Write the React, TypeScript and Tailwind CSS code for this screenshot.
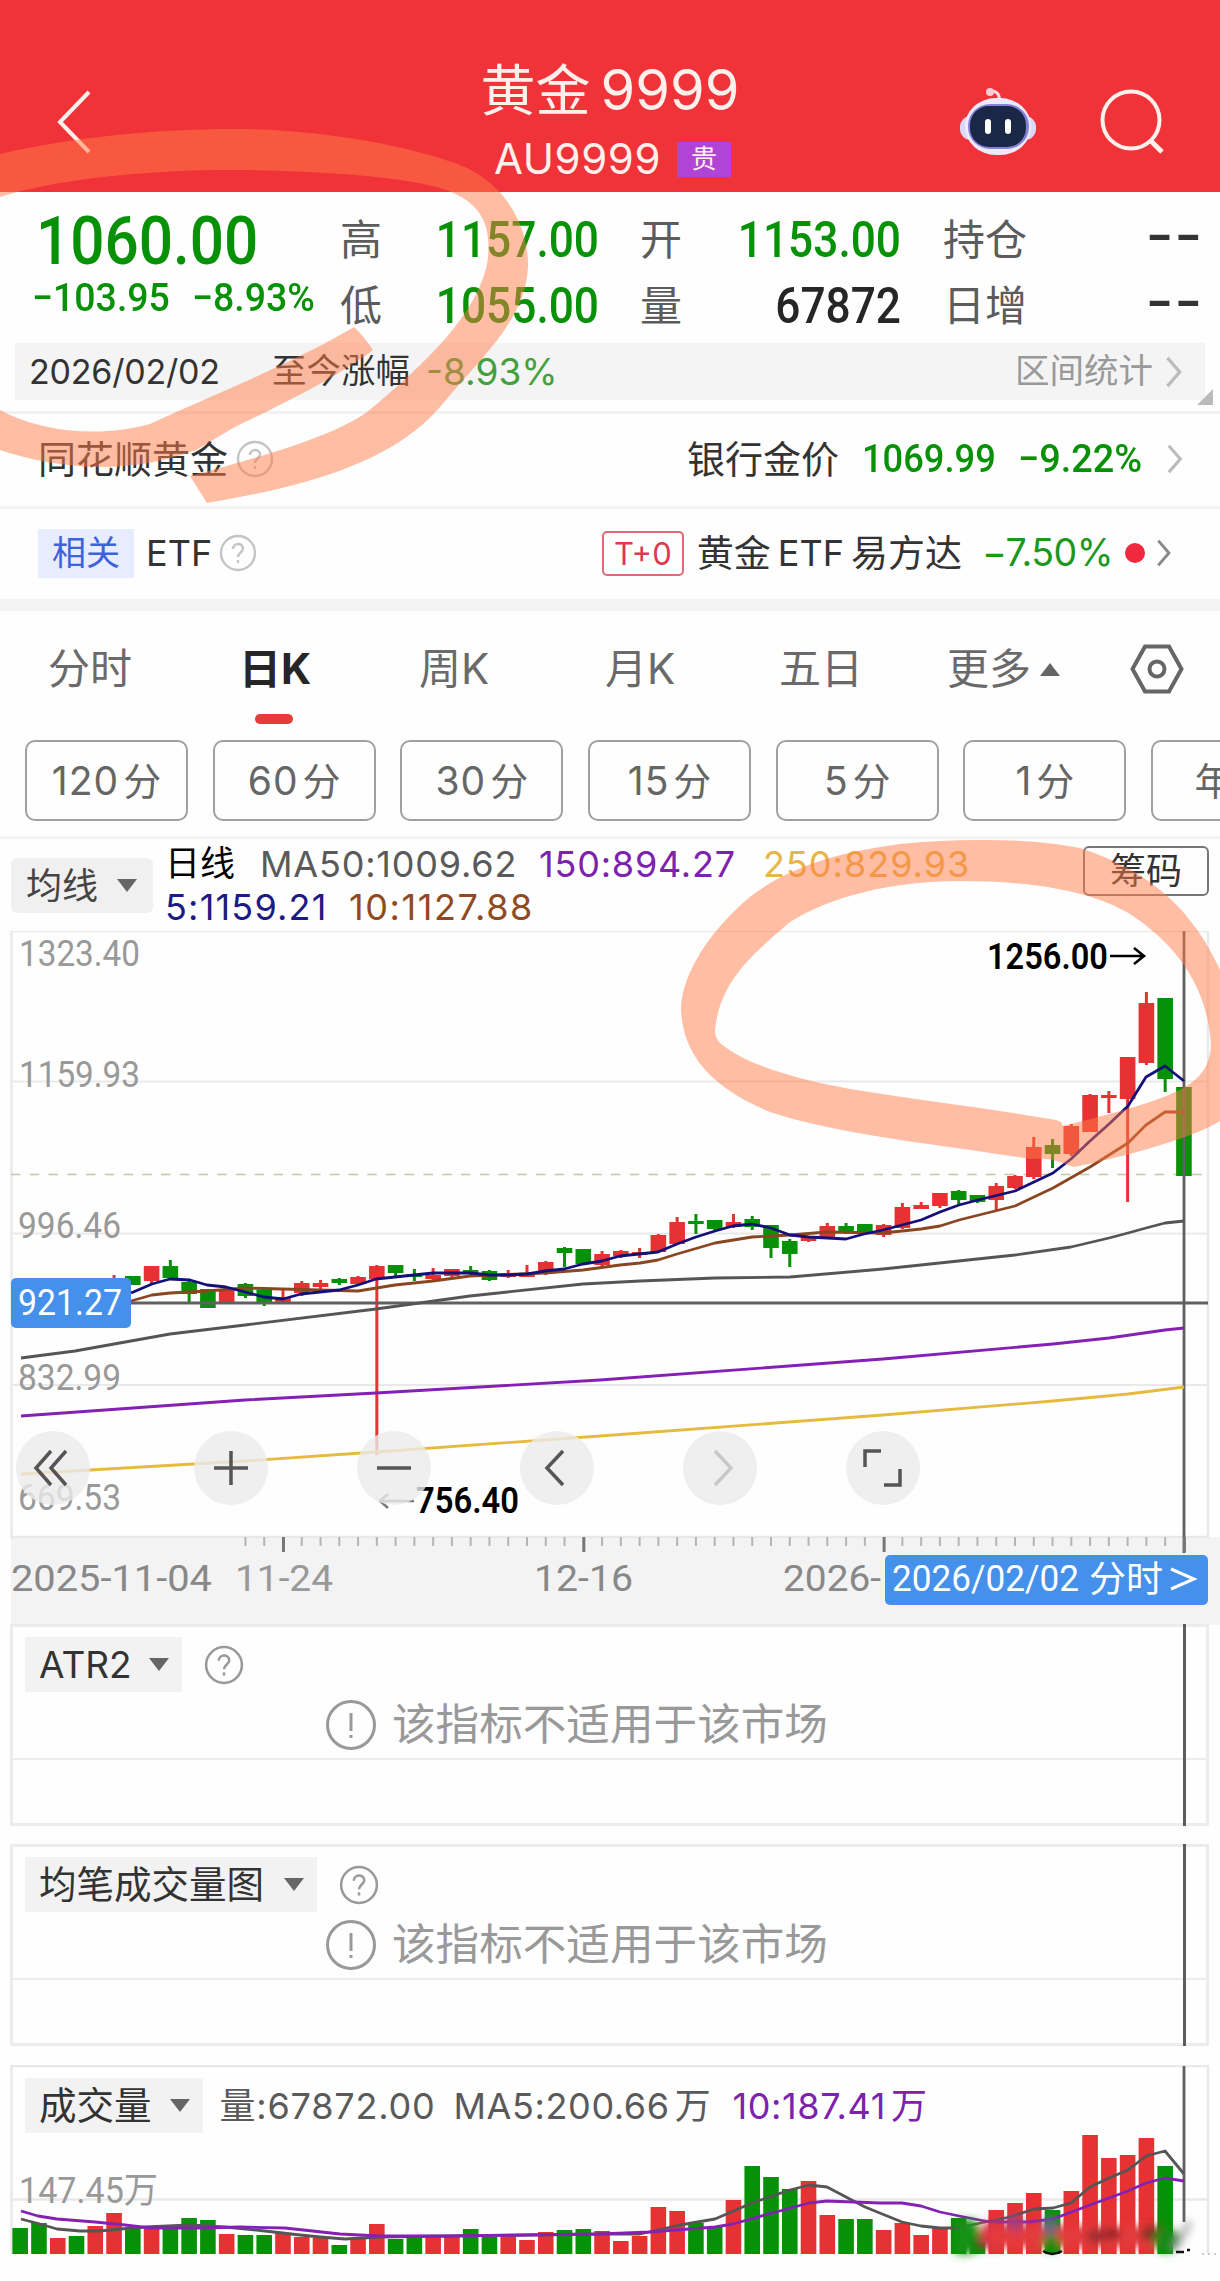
import React from 'react';

const RED = '#e63233';
const GREEN = '#079107';

// [direction, body top, body bottom, wick top, wick bottom], first entry is day 5
const candles: [string, number, number, number, number][] = [
  ['r', 1279, 1285, 1275, 1286],
  ['g', 1276, 1285, 1276, 1285],
  ['r', 1266, 1281, 1266, 1284],
  ['g', 1266, 1278, 1260, 1279],
  ['g', 1282, 1294, 1280, 1302],
  ['g', 1289, 1308, 1289, 1308],
  ['r', 1289, 1302, 1289, 1303],
  ['g', 1284, 1296, 1283, 1298],
  ['g', 1290, 1302, 1289, 1306],
  ['r', 1297, 1302, 1289, 1303],
  ['r', 1283, 1293, 1281, 1296],
  ['r', 1283, 1287, 1280, 1289],
  ['g', 1279, 1283, 1278, 1285],
  ['r', 1277, 1284, 1276, 1285],
  ['r', 1266, 1279, 1265, 1455],
  ['g', 1265, 1273, 1265, 1276],
  ['g', 1274, 1277, 1269, 1281],
  ['r', 1275, 1279, 1268, 1280],
  ['r', 1269, 1276, 1269, 1277],
  ['g', 1270, 1274, 1266, 1275],
  ['g', 1271, 1280, 1270, 1281],
  ['r', 1273, 1277, 1270, 1278],
  ['r', 1274, 1277, 1265, 1277],
  ['r', 1262, 1274, 1261, 1275],
  ['g', 1248, 1253, 1247, 1267],
  ['g', 1249, 1264, 1249, 1264],
  ['r', 1254, 1265, 1251, 1267],
  ['r', 1251, 1256, 1250, 1258],
  ['r', 1252, 1255, 1248, 1258],
  ['r', 1235, 1252, 1234, 1253],
  ['r', 1222, 1244, 1217, 1245],
  ['g', 1221, 1224, 1214, 1234],
  ['g', 1220, 1229, 1220, 1230],
  ['r', 1222, 1227, 1214, 1228],
  ['g', 1219, 1227, 1216, 1230],
  ['g', 1225, 1248, 1225, 1258],
  ['g', 1241, 1254, 1239, 1267],
  ['r', 1237, 1241, 1236, 1242],
  ['r', 1226, 1237, 1223, 1238],
  ['g', 1226, 1232, 1223, 1234],
  ['g', 1224, 1232, 1224, 1233],
  ['r', 1225, 1235, 1224, 1237],
  ['r', 1207, 1228, 1203, 1229],
  ['r', 1205, 1209, 1202, 1209],
  ['r', 1193, 1206, 1193, 1208],
  ['g', 1191, 1200, 1190, 1204],
  ['g', 1195, 1202, 1195, 1203],
  ['r', 1186, 1200, 1183, 1211],
  ['r', 1176, 1188, 1175, 1189],
  ['r', 1147, 1177, 1137, 1179],
  ['g', 1145, 1154, 1139, 1168],
  ['r', 1126, 1154, 1124, 1156],
  ['r', 1095, 1132, 1094, 1132],
  ['r', 1095, 1098, 1091, 1113],
  ['r', 1057, 1099, 1057, 1202],
  ['r', 1003, 1063, 992, 1065],
  ['g', 998, 1079, 998, 1092],
  ['g', 1087, 1176, 1087, 1176],
];

const volumes: [string, number][] = [
  ['g', 26], ['g', 31], ['r', 16], ['g', 18], ['r', 28], ['r', 41], ['g', 26], ['r', 25], ['g', 25], ['g', 36],
  ['g', 34], ['r', 20], ['g', 19], ['g', 19], ['r', 21], ['r', 17], ['r', 16], ['g', 9], ['r', 15], ['r', 30],
  ['g', 15], ['g', 19], ['r', 17], ['r', 18], ['g', 25], ['g', 17], ['r', 20], ['r', 14], ['r', 22], ['g', 24],
  ['g', 25], ['r', 23], ['r', 13], ['r', 18], ['r', 47], ['r', 43], ['g', 31], ['g', 27], ['r', 54], ['g', 88],
  ['g', 77], ['g', 65], ['r', 73], ['r', 39], ['g', 35], ['g', 35], ['r', 24], ['r', 31], ['r', 19], ['r', 26],
  ['g', 36], ['g', 12], ['r', 44], ['r', 51], ['r', 61], ['g', 44], ['r', 63], ['r', 119], ['r', 96], ['r', 99],
  ['r', 116], ['g', 88],
];

const ma5 =
  '131,1293 152,1284 170,1279 190,1280 207,1285 226,1287 245,1292 264,1297 283,1299 301,1294 320,1292 339,1290 358,1285 376,1279 395,1277 414,1275 433,1273 470,1273 490,1275 508,1275 527,1274 545,1271 564,1269 583,1264 602,1261 620,1256 658,1252 677,1244 696,1237 715,1231 733,1226 752,1224 771,1228 790,1235 809,1237 846,1239 864,1234 883,1230 902,1225 921,1220 940,1212 959,1205 978,1200 1015,1191 1034,1182 1053,1173 1071,1159 1090,1141 1109,1124 1128,1106 1146,1077 1165,1066 1184,1081';
const ma10 =
  '131,1301 152,1295 170,1293 207,1291 245,1288 320,1290 358,1291 395,1285 433,1281 470,1276 545,1273 583,1270 620,1265 640,1263 658,1260 677,1254 715,1243 752,1237 790,1235 827,1232 883,1233 921,1229 940,1226 959,1220 1015,1206 1053,1188 1090,1167 1128,1143 1146,1125 1165,1112 1184,1112';
const ma50 =
  '21,1358 75,1351 170,1334 245,1325 376,1309 470,1296 583,1284 640,1281 715,1278 790,1277 883,1269 1015,1255 1071,1247 1109,1238 1128,1233 1146,1228 1165,1223 1184,1221';
const ma150 = '21,1416 245,1400 376,1393 600,1380 883,1359 1053,1344 1109,1338 1165,1330 1184,1328';
const ma250 = '21,1474 245,1461 376,1452 600,1436 883,1415 1053,1401 1128,1394 1184,1387';

const volMa5 =
  '21,2219 40,2224 57,2229 80,2231 100,2231 120,2229 145,2227 190,2225 225,2227 265,2231 300,2235 320,2237 345,2239 380,2237 450,2236 600,2234 640,2234 680,2225 715,2219 752,2203 790,2190 809,2185 827,2187 865,2207 902,2222 921,2226 940,2228 958,2228 985,2222 1010,2217 1034,2209 1053,2208 1071,2203 1090,2187 1109,2178 1128,2170 1146,2156 1165,2151 1184,2174';
const volMa10 =
  '21,2211 38,2216 57,2219 95,2222 125,2225 150,2228 200,2228 240,2227 285,2228 340,2234 380,2236 450,2236 600,2234 650,2232 715,2227 733,2224 765,2215 809,2203 827,2201 880,2203 902,2203 921,2206 940,2212 964,2217 990,2222 1030,2222 1053,2219 1090,2205 1128,2191 1146,2183 1165,2178 1184,2181';

const candleX = (day: number) => 20.2 + day * 18.77;

const tabs = [
  { label: '分时', left: 'w-[163px] pl-[48px]' },
  { label: '日K', left: 'w-[204px] pl-[76px]', active: true },
  { label: '周K', left: 'w-[188px] pl-[52px]' },
  { label: '月K', left: 'w-[188px] pl-[50px]' },
  { label: '五日', left: 'w-[160px] pl-[36px]' },
];

const periods = [
  ['120', '分'],
  ['60', '分'],
  ['30', '分'],
  ['15', '分'],
  ['5', '分'],
  ['1', '分'],
  ['', '年线'],
];

function Chevron({ className = 'h-[34px] w-[18px]', color = '#bbb' }: { className?: string; color?: string }) {
  return (
    <svg viewBox="0 0 18 34" className={className} fill="none" stroke={color} strokeWidth="3.500">
      <path d="M2 2 L15 17 L2 32" />
    </svg>
  );
}

function HelpIcon({ color = '#c4c4c4', className = 'size-[38px]' }: { color?: string; className?: string }) {
  return (
    <svg viewBox="0 0 38 38" className={`shrink-0 ${className}`} fill="none" stroke={color} strokeWidth="2.4">
      <circle cx="19" cy="19" r="17" />
      <path d="M14 15 C14 8.500 24 8.500 24 14.500 C24 18.500 19 18.500 19 23" />
      <path d="M19 26 V29" />
    </svg>
  );
}

function RobotIcon() {
  return (
    <svg viewBox="0 0 78 72" className="h-[72px] w-[78px]">
      <path d="M38 16 C42 8 34 3 29 6" fill="none" stroke="#f6d9e6" strokeWidth="3" />
      <circle cx="30" cy="6" r="4" fill="#f8cdd3" />
      <rect x="0" y="30" width="76" height="24" rx="11" fill="#dcd8f6" />
      <rect x="5" y="12" width="66" height="57" rx="31" fill="#eeeafd" />
      <rect x="8" y="18" width="61" height="45" rx="22" fill="#8583d8" />
      <rect x="10" y="20" width="56" height="41" rx="19" fill="#1b2747" />
      <rect x="25" y="33" width="6" height="15" rx="3" fill="#fff" />
      <rect x="45" y="33" width="6" height="15" rx="3" fill="#fff" />
    </svg>
  );
}

function Caret({ up = false, className = '' }: { up?: boolean; className?: string }) {
  return (
    <svg viewBox="0 0 20 13" className={`h-[13px] w-[20px] shrink-0 ${className}`} fill="#666">
      <path d={up ? 'M10 0 L20 13 L0 13 Z' : 'M0 0 L20 0 L10 13 Z'} />
    </svg>
  );
}

function Header() {
  return (
    <header className="grid h-[192px] grid-cols-[260px_1fr_260px] bg-[#f03239] text-[#fff0ec]">
      <div className="pt-[90px] pl-[56px]">
        <svg viewBox="0 0 36 64" className="h-[64px] w-[36px]" fill="none" stroke="currentColor" strokeWidth="4">
          <path d="M33 2 L4 32 L33 62" />
        </svg>
      </div>
      <div className="flex flex-col items-center pt-[58px]">
        <h1 className="flex h-[64px] items-center gap-[10px] text-[55px] leading-none">
          <span>黄金</span>
          <span className="text-[56px]">9999</span>
        </h1>
        <div className="mt-[18px] flex h-[38px] items-center gap-[16px] pl-[5px]">
          <span className="text-[42px] leading-none tracking-[0.6px]">AU9999</span>
          <span className="flex h-[35px] w-[54px] items-center justify-center bg-[#b143d6] text-[26px] leading-none">贵</span>
        </div>
      </div>
      <div className="flex pt-[86px]">
        <RobotIcon />
        <svg viewBox="0 0 68 68" className="mt-[3px] ml-[61px] h-[68px] w-[68px]" fill="none" stroke="currentColor" strokeWidth="4">
          <circle cx="32" cy="31" r="28.500" />
          <path d="M51 51 L63 63" strokeWidth="5" />
        </svg>
      </div>
    </header>
  );
}

function QuoteNumber({ value, dark = false }: { value: string; dark?: boolean }) {
  return (
    <span className={`origin-right scale-x-[.885] text-right font-[Roboto] text-[50px] font-medium ${dark ? 'text-[#262626]' : 'text-[#079107]'}`}>
      {value}
    </span>
  );
}

function QuoteBlank() {
  return <span className="-translate-y-[5px] origin-right scale-x-[1.36] text-right font-[Roboto] text-[56px] font-medium tracking-[2px] text-[#333]">--</span>;
}

function Quote() {
  return (
    <section className="flex h-[151px] pt-[15px] leading-none">
      <div className="w-[340px] pl-[36px] font-[Roboto] font-medium whitespace-nowrap text-[#079107]">
        <p className="h-[68px] origin-left scale-x-[.9] text-[67px] leading-[68px]">1060.00</p>
        <p className="-ml-[4px] flex origin-left scale-x-[.96] gap-[23px] pt-[3px] text-[39px] leading-[40px]">
          <span>−103.95</span>
          <span>−8.93%</span>
        </p>
      </div>
      <div className="grid h-[132px] w-[865px] grid-cols-[40px_219px_41px_261px_126px_177px] grid-rows-2 items-center text-[42px] text-[#5c5c5c]">
        <span>高</span>
        <QuoteNumber value="1157.00" />
        <span className="ml-[41px]">开</span>
        <QuoteNumber value="1153.00" />
        <span className="text-right">持仓</span>
        <QuoteBlank />
        <span>低</span>
        <QuoteNumber value="1055.00" />
        <span className="ml-[41px]">量</span>
        <QuoteNumber value="67872" dark />
        <span className="text-right">日增</span>
        <QuoteBlank />
      </div>
    </section>
  );
}

function RangeBar() {
  return (
    <section className="relative h-[71px] border-b-[3px] border-[#f1f1f1] px-[15px]">
      <div className="flex h-[57px] items-center bg-[#f4f4f4] pl-[14px] text-[34.500px] leading-none text-[#333]">
        <span className="w-[243px] text-[34px] tracking-[-0.200px]">2026/02/02</span>
        <span>至今涨幅</span>
        <span className="ml-[16px] text-[37px] text-[#43a03c]">-8.93%</span>
        <span className="ml-auto text-[34.500px] text-[#999]">区间统计</span>
        <Chevron className="mr-[22px] ml-[12px] h-[32px] w-[18px]" />
      </div>
      <svg viewBox="0 0 16 16" className="absolute right-[7px] bottom-[6px] size-[16px]" fill="#bbb">
        <path d="M16 0 V16 H0 Z" />
      </svg>
    </section>
  );
}

function LinkRows() {
  return (
    <section className="leading-none text-[#333]">
      <div className="flex h-[95px] items-center border-b-[3px] border-[#f3f3f3] pb-[2px] pl-[38px] text-[38px]">
        <span>同花顺黄金</span>
        <HelpIcon className="ml-[8px] size-[38px]" />
        <span className="ml-auto">银行金价</span>
        <span className="ml-[23px] w-[156px] origin-left scale-x-[.93] font-[Roboto] text-[39px] font-medium text-[#079107]">1069.99</span>
        <span className="w-[129px] origin-left scale-x-[.97] font-[Roboto] text-[39px] font-medium text-[#079107]">−9.22%</span>
        <Chevron className="mr-[37px] ml-[20px] h-[32px] w-[16px]" />
      </div>
      <div className="flex h-[90px] items-center pb-[2px] pl-[38px] text-[36px]">
        <span className="flex h-[49px] w-[96px] items-center justify-center bg-[#e7edfe] text-[34px] text-[#3c63d9]">相关</span>
        <span className="ml-[12px] text-[36px]">ETF</span>
        <HelpIcon className="ml-[7px] size-[38px]" />
        <span className="ml-auto flex h-[45px] w-[82px] items-center justify-center rounded-[5px] border-2 border-[#e0697a] text-[31px] text-[#dd3a50]">
          T+0
        </span>
        <span className="ml-[13px] flex items-center gap-[7px] text-[37px]">
          黄金<span className="text-[36px]">ETF</span>易方达
        </span>
        <span className="ml-[20px] text-[37.500px] tracking-[-0.500px] text-[#1d971d]">−7.50%</span>
        <span className="ml-[12px] size-[20px] rounded-full bg-[#f02840]" />
        <Chevron className="mr-[48px] ml-[11px] h-[28px] w-[16px]" color="#888" />
      </div>
      <div className="h-[12px] bg-[#f4f4f4]" />
    </section>
  );
}

function PeriodTabs() {
  return (
    <section className="h-[228px] overflow-hidden border-b-[3px] border-[#f3f3f3] leading-none">
      <nav className="flex h-[115px] items-center pt-[1px] text-[42px] text-[#6a6a6a]">
        {tabs.map((tab) => (
          <span key={tab.label} className={`${tab.left} relative ${tab.active ? 'font-bold text-[#262626]' : ''}`}>
            {tab.label}
            {tab.active && <span className="absolute -bottom-[34px] left-[92px] h-[10px] w-[38px] rounded-[5px] bg-[#e53d3b]" />}
          </span>
        ))}
        <span className="ml-[44px]">更多</span>
        <Caret up className="ml-[9px]" />
        <svg viewBox="0 0 54 50" className="ml-[70px] h-[50px] w-[54px]" fill="none" stroke="#666" strokeWidth="4">
          <path d="M15 2.500 H39 L51.500 25 L39 47.500 H15 L2.500 25 Z" />
          <circle cx="27" cy="25" r="7.500" />
        </svg>
      </nav>
      <div className="mt-[14px] flex w-[1400px] gap-[24.700px] pl-[25px]">
        {periods.map(([count, unit]) => (
          <button key={count} className="flex h-[81px] w-[163px] items-center justify-center gap-[4px] rounded-[10px] border-2 border-[#a0a0a0] text-[38px] text-[#666]">
            {count && <span className="text-[39px] tracking-[1px]">{count}</span>}
            <span>{unit}</span>
          </button>
        ))}
      </div>
    </section>
  );
}

function AverageLegend() {
  return (
    <section className="flex h-[92px] leading-none whitespace-nowrap">
      <div className="mt-[19px] ml-[11px] flex h-[55px] w-[142px] items-center rounded-[6px] bg-[#f0f0f0] pl-[15px] text-[36px] text-[#444]">
        均线
        <Caret className="ml-[19px]" />
      </div>
      <div className="ml-[12px] pt-[2px] text-[36px]">
        <div className="flex h-[45px] items-center">
          <span className="w-[95px] text-[35px] text-black">日线</span>
          <span className="w-[279px] tracking-[0.800px] text-[#5a5a5a]">MA50:1009.62</span>
          <span className="w-[224px] tracking-[0.800px] text-[#7c22ae]">150:894.27</span>
          <span className="tracking-[1px] text-[#e9b548]">250:829.93</span>
        </div>
        <div className="flex h-[42px] items-center">
          <span className="w-[184px] tracking-[1.200px] text-[#1e1a84]">5:1159.21</span>
          <span className="tracking-[1.600px] text-[#8f4a22]">10:1127.88</span>
        </div>
      </div>
      <div className="mt-[7px] mr-[11px] ml-auto flex h-[50px] w-[126px] items-center justify-center rounded-[6px] border-2 border-[#777] text-[36px] text-[#333]">
        筹码
      </div>
    </section>
  );
}

interface LabelProps {
  x: number;
  y: number;
  w: number;
  children: string;
  fill?: string;
  bold?: boolean;
}

function AxisLabel({ x, y, w, children, fill = '#999', bold = false }: LabelProps) {
  return (
    <text
      x={x}
      y={y}
      textLength={w}
      lengthAdjust="spacingAndGlyphs"
      fill={fill}
      fontFamily="Roboto, 'Noto Sans CJK SC', sans-serif"
      fontSize="36.500"
      fontWeight={bold ? 600 : 400}
    >
      {children}
    </text>
  );
}

function CandleChart() {
  return (
    <div className="relative h-[695px]">
      <svg viewBox="0 930 1220 695" className="block h-[695px] w-full">
        <rect x="11" y="1536" width="1209" height="88" fill="#f3f3f3" />
        <g fill="none" stroke="#e9e9e9" strokeWidth="2">
          <rect x="11.500" y="930" width="1196.500" height="606" strokeWidth="2.500" />
          <path d="M11 1080.500 H1208 M11 1232.500 H1208 M11 1384 H1208" />
        </g>
        <path d="M11 1173.500 H1208" stroke="#c6c6a2" strokeWidth="1.600" strokeDasharray="9.500 9.250" />
        <AxisLabel x={19} y={965} w={121}>1323.40</AxisLabel>
        <AxisLabel x={19} y={1086} w={121}>1159.93</AxisLabel>
        <AxisLabel x={18} y={1237} w={103}>996.46</AxisLabel>
        <AxisLabel x={18} y={1389} w={103}>832.99</AxisLabel>
        <AxisLabel x={18} y={1509} w={103}>669.53</AxisLabel>

        {candles.map(([dir, top, bottom, high, low], i) => {
          const x = candleX(i + 5);
          return (
            <g key={i} fill={dir === 'r' ? RED : GREEN}>
              <rect x={x - 1.5} y={high - 1} width="3" height={low - high} />
              <rect x={x - 7.8} y={top - 1} width="15.600" height={bottom - top} />
            </g>
          );
        })}
        <g fill="none" strokeWidth="2.800" strokeLinejoin="round">
          <path d="M131 1302 H1208 M1184 930 V1552" stroke="#606060" />
          <g transform="translate(0 -1)">
            <polyline points={ma250} stroke="#e6b93f" />
            <polyline points={ma150} stroke="#8420b4" />
            <polyline points={ma50} stroke="#555" />
            <polyline points={ma10} stroke="#8a4521" />
            <polyline points={ma5} stroke="#14107a" />
          </g>
        </g>

        <AxisLabel x={987} y={968} w={121} fill="#000" bold>1256.00</AxisLabel>
        <path d="M1110 955 H1144 M1134 947 L1144 955 L1134 963" fill="none" stroke="#000" strokeWidth="2.600" />
        <AxisLabel x={416} y={1512} w={103} fill="#000" bold>756.40</AxisLabel>
        <path d="M414 1500 H380 M388 1493 L380 1500 L388 1507" fill="none" stroke="#777" strokeWidth="2.400" />

        <rect x="11" y="1277" width="120" height="50" rx="5" fill="#4490ea" />
        <AxisLabel x={18} y={1314} w={104} fill="#fff">921.27</AxisLabel>

        {Array.from({ length: 51 }, (_, i) => {
          const major = (i + 12) % 16 === 14;
          return (
            <rect key={i} x={candleX(i + 12) - 1} y="1536" width={major ? 3 : 2} height={major ? 15 : 9} fill={major ? '#777' : '#b5b5b5'} />
          );
        })}
        <AxisLabel x={11} y={1590} w={201} fill="#888">2025-11-04</AxisLabel>
        <AxisLabel x={235} y={1590} w={98} fill="#999">11-24</AxisLabel>
        <AxisLabel x={534} y={1590} w={99} fill="#888">12-16</AxisLabel>
        <AxisLabel x={783} y={1590} w={98} fill="#888">2026-</AxisLabel>
        <rect x="885" y="1554" width="323" height="50" rx="5" fill="#4490ea" />
        <AxisLabel x={892} y={1590} w={187} fill="#fff">2026/02/02</AxisLabel>
        <AxisLabel x={1089} y={1591} w={74} fill="#fff">分时</AxisLabel>
        <path d="M1171 1568 L1194 1578 L1171 1588" fill="none" stroke="#fff" strokeWidth="3" />
      </svg>
      <Toolbar />
    </div>
  );
}

function Toolbar() {
  const icons = [
    'M35 20 L20 37 L35 54 M50 20 L35 37 L50 54',
    'M37 20 V54 M20 37 H54',
    'M20 37 H54',
    'M43 20 L27 37 L43 54',
    'M32 20 L48 37 L32 54',
    'M19 36 V20 H35 M54 38 V54 H38',
  ];
  return (
    <div className="absolute top-[500px] left-[16px] flex gap-[89px]">
      {icons.map((d, i) => (
        <button key={d} className={`size-[74px] rounded-full bg-[#ebebeb]/80 ${i === 0 ? 'mr-[15px]' : ''}`}>
          <svg viewBox="0 0 74 74" className="size-[74px]" fill="none" stroke={i === 4 ? '#c8c8c8' : '#555'} strokeWidth="3.500">
            <path d={d} />
          </svg>
        </button>
      ))}
    </div>
  );
}

function IndicatorName({ name, className = 'gap-[20px] text-[37.500px]' }: { name: string; className?: string }) {
  return (
    <span className={`flex h-[55px] items-center bg-[#f2f2f2] pr-[13px] pl-[14px] leading-none text-[#333] ${className}`}>
      {name}
      <Caret />
    </span>
  );
}

function EmptyPanel({ name, nameClass, className }: { name: string; nameClass?: string; className: string }) {
  return (
    <section className={`relative ml-[10px] h-[202px] w-[1199px] border-[3px] border-[#ececec] leading-none ${className}`}>
      <div className="flex items-center gap-[22px] pt-[10px] pl-[12px]">
        <IndicatorName name={name} className={nameClass} />
        <HelpIcon color="#999" className="size-[40px]" />
      </div>
      <div className="flex h-[68px] items-center border-b-2 border-[#ececec] pl-[312px] text-[43.600px] text-[#999]">
        <svg viewBox="0 0 52 52" className="mr-[15px] size-[52px]" fill="none" stroke="#999" strokeWidth="3">
          <circle cx="26" cy="26" r="23.500" />
          <path d="M26 14 V32 M26 36 V39" />
        </svg>
        该指标不适用于该市场
      </div>
      <div className="absolute -top-[3px] right-[20px] h-[202px] w-[3px] bg-[#5c5c5c]" />
    </section>
  );
}

function VolumePanel() {
  return (
    <section className="relative mt-[19px] h-[216px] leading-none whitespace-nowrap">
      <svg viewBox="0 2065 1220 216" className="block h-[216px] w-full">
        <defs>
          <filter id="soft" x="-20%" y="-50%" width="140%" height="200%">
            <feGaussianBlur stdDeviation="4" />
          </filter>
        </defs>
        <path d="M11.500 2254 V2066 H1208 V2254 M11 2199.500 H1208" fill="none" stroke="#e9e9e9" strokeWidth="2.500" />
        <AxisLabel x={19} y={2203} w={139}>147.45万</AxisLabel>
        {volumes.map(([dir, h], i) => (
          <rect key={i} x={candleX(i) - 7.8} y={2254 - h} width="15.600" height={h} fill={dir === 'r' ? RED : GREEN} />
        ))}
        <g fill="none" strokeWidth="2.800" strokeLinejoin="round">
          <path d="M1184 2066 V2222" stroke="#606060" />
          <polyline points={volMa5} stroke="#555" />
          <polyline points={volMa10} stroke="#8420b4" />
        </g>
        <g filter="url(#soft)">
          <path d="M958 2220 H976 L984 2246 L970 2254 H956 Z" fill="#159215" />
          <ellipse cx="981" cy="2243" rx="6" ry="6" fill="#103c10" />
          <ellipse cx="993" cy="2235" rx="13" ry="14" fill="#d9304b" />
          <rect x="986" y="2226" width="170" height="21" rx="10" fill="#e43a3c" />
          <ellipse cx="1015" cy="2223" rx="8" ry="8" fill="#a04080" />
          <ellipse cx="1050" cy="2226" rx="7" ry="10" fill="#5b6a8a" />
          <ellipse cx="1051" cy="2243" rx="9" ry="8" fill="#0b8a10" />
          <ellipse cx="1096" cy="2236" rx="10" ry="7" fill="#9c2b2f" />
          <ellipse cx="1112" cy="2234" rx="8" ry="5" fill="#7b1a20" />
          <ellipse cx="1155" cy="2234" rx="14" ry="8" fill="#7c2a20" />
          <ellipse cx="1166" cy="2240" rx="13" ry="12" fill="#158a14" />
          <path d="M1174 2250 L1190 2222" stroke="#999" strokeWidth="5" />
        </g>
        <path d="M1043 2251 Q1052 2257 1062 2251 M1176 2252 H1184 M1187 2250 H1190" fill="none" stroke="#111" strokeWidth="2.500" />
        <path d="M1202 2254 H1217" stroke="#ccc" strokeWidth="2" strokeDasharray="2 4" />
      </svg>
      <div className="absolute top-[13px] left-[25px] flex items-center text-[36px]">
        <IndicatorName name="成交量" className="gap-[18px] text-[37.500px]" />
        <span className="ml-[17px] w-[234px] tracking-[0.800px] text-[#5a5a5a]">量:67872.00</span>
        <span className="flex w-[279px] gap-[5px] tracking-[0.600px] text-[#5a5a5a]">
          MA5:200.66<span>万</span>
        </span>
        <span className="flex gap-[5px] tracking-[0.600px] text-[#7c22ae]">
          10:187.41<span>万</span>
        </span>
      </div>
    </section>
  );
}

// Translucent highlighter loops drawn over the price and the latest candles
function MarkerStrokes() {
  return (
    <svg viewBox="0 0 1220 2281" className="pointer-events-none absolute inset-0 h-[2281px] w-[1220px]" fill="#ff7b47" fillOpacity="0.5">
      <path
        d="M0 154 C70 138 150 129 235 129 C320 129 410 146 460 165 C505 183 528 225 528 265 C527 320 480 358 440 407 C390 465 300 487 207 503 L190 476 C255 458 325 440 366 413 C430 360 475 315 487 265 C494 220 478 196 428 185 C370 172 250 168 180 171 C110 174 40 184 0 197 Z
        M0 410 C40 432 100 438 150 424 C190 405 290 365 354 327 Q362 334 373 350 C330 382 270 410 233 428 L196 450 C130 475 60 470 0 450 Z"
      />
      <path d="M1220 970 C1195 915 1155 872 1080 848 C1030 838 960 838 900 844 C840 852 790 866 750 897 C710 930 681 975 681 1010 C683 1050 705 1085 770 1112 C840 1135 930 1143 1030 1159 C1050 1158 1055 1160 1074 1167 C1110 1160 1190 1140 1220 1121 L1220 1121 V970 Z M1061 1122 L1056 1120 C980 1107 910 1099 850 1089 C800 1080 745 1065 720 1043 Q715 1038 715 1030 C720 985 745 960 790 922 C830 897 890 881 960 881 C1030 881 1090 890 1130 914 C1180 947 1208 990 1211 1045 C1209 1085 1180 1097 1063 1126 Z" fillRule="evenodd" />
    </svg>
  );
}

export default function App() {
  return (
    <main className="relative h-[2281px] w-[1220px] overflow-hidden bg-[#fefefe] font-[Inter,'Noto_Sans_CJK_SC',sans-serif]">
      <Header />
      <Quote />
      <RangeBar />
      <LinkRows />
      <PeriodTabs />
      <AverageLegend />
      <CandleChart />
      <EmptyPanel name="ATR2" nameClass="gap-[17px] text-[37px]" className="-mt-[2px]" />
      <EmptyPanel name="均笔成交量图" className="mt-[18px]" />
      <VolumePanel />
      <MarkerStrokes />
    </main>
  );
}
